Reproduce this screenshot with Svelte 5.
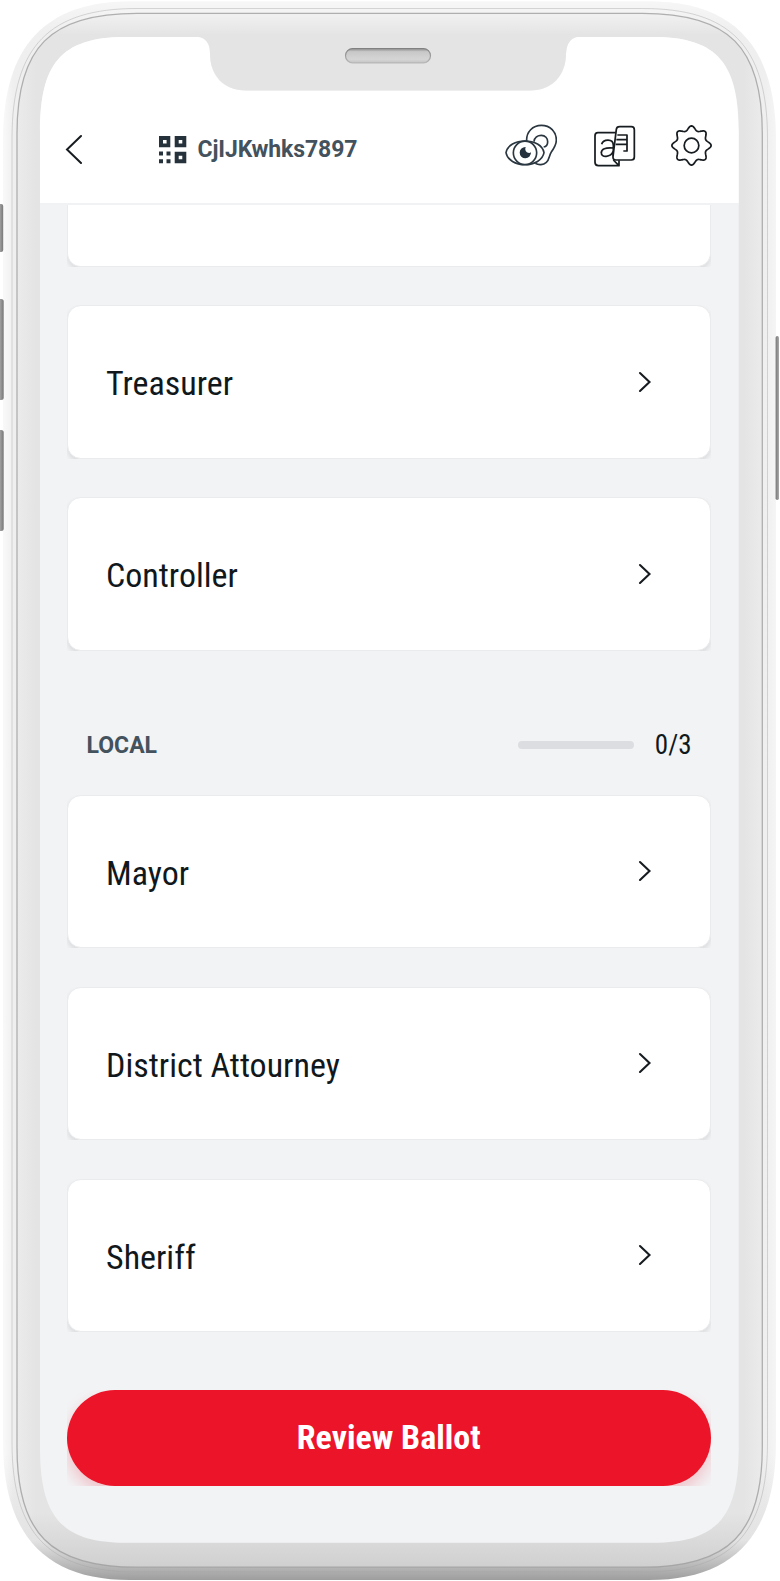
<script>
  const stateRaces = ['Treasurer', 'Controller'];
  const localRaces = ['Mayor', 'District Attourney', 'Sheriff'];

  const points = Array.from({ length: 160 }, (_, i) => {
    const a = (i / 160) * Math.PI * 2;
    const r = 52 + 6.4 * Math.cos(8 * a) + 0.4 * Math.cos(16 * a);
    return `${(61 + r * Math.cos(a)).toFixed(2)} ${(61 + r * Math.sin(a)).toFixed(2)}`;
  });
  const gearPath = `M${points.join('L')}Z`;

  // Rounded device outline: sides, top and bottom, curve length and handle offset
  function outline(l, t, r, b, w, h, hx, hy) {
    return `M${l} ${t + h}C${l} ${t + hy} ${l + hx} ${t} ${l + w} ${t}H${r - w}C${r - hx} ${t} ${r} ${t + hy} ${r} ${t + h}V${b - h}C${r} ${b - hy} ${r - hx} ${b} ${r - w} ${b}H${l + w}C${l + hx} ${b} ${l} ${b - hy} ${l} ${b - h}Z`;
  }
  const shell = outline(3, 1.5, 776, 1580, 127, 138, 43, 44);
  const rim = outline(12, 8.5, 767.5, 1572, 125, 130, 38, 37);
  const bezel = outline(17, 13.4, 762.3, 1567.2, 120, 120, 33, 34);
  const screen = outline(40, 37, 738.7, 1542.7, 85, 95, 20, 28);
</script>

{#snippet race(name)}
  <div class="clip">
    <button class="card">
      <span class="name">{name}</span>
      <svg class="chevron" width="14" height="22" viewBox="0 0 14 22"><path d="M2 2L11.5 11L2 20" /></svg>
    </button>
  </div>
{/snippet}

<div class="phone">
  <svg class="frame" width="780" height="1581" viewBox="0 0 780 1581">
    <defs>
      <linearGradient id="side" x1="0" x2="1"><stop offset="0" stop-color="#f9f9f9" /><stop offset=".014" stop-color="#efefef" /><stop offset=".986" stop-color="#efefef" /><stop offset="1" stop-color="#f5f5f5" /></linearGradient>
      <linearGradient id="inner" x1="0" x2="1"><stop offset="0" stop-color="#ebebeb" /><stop offset=".025" stop-color="#e4e4e4" /><stop offset=".975" stop-color="#e4e4e4" /><stop offset="1" stop-color="#ebebeb" /></linearGradient>
      <linearGradient id="base" x1="0" y1="0" x2="0" y2="1"><stop offset="0" stop-color="#fff" stop-opacity=".45" /><stop offset=".02" stop-color="#fff" stop-opacity="0" /><stop offset=".92" stop-color="#888" stop-opacity="0" /><stop offset=".975" stop-color="#888" stop-opacity=".12" /><stop offset="1" stop-color="#777" stop-opacity=".68" /></linearGradient>
      <linearGradient id="innerBase" x1="0" y1="0" x2="0" y2="1"><stop offset="0" stop-color="#fff" stop-opacity=".5" /><stop offset=".014" stop-color="#fff" stop-opacity="0" /><stop offset=".965" stop-color="#999" stop-opacity="0" /><stop offset="1" stop-color="#999" stop-opacity=".27" /></linearGradient>
      <linearGradient id="keyL" x1="0" x2="1"><stop offset="0" stop-color="#ccc" /><stop offset=".45" stop-color="#9a9a9a" /><stop offset="1" stop-color="#777" /></linearGradient>
      <linearGradient id="keyR" x1="0" x2="1"><stop offset="0" stop-color="#777" /><stop offset="1" stop-color="#aaa" /></linearGradient>
      <linearGradient id="slot" x1="0" y1="0" x2="0" y2="1"><stop offset="0" stop-color="#888" /><stop offset=".22" stop-color="#c8c8c8" /><stop offset=".75" stop-color="#d5d5d5" /><stop offset="1" stop-color="#c4c4c4" /></linearGradient>
      <linearGradient id="slotEdge" x1="0" y1="0" x2="0" y2="1"><stop offset="0" stop-color="#808080" /><stop offset="1" stop-color="#b8b8b8" /></linearGradient>
    </defs>
    <path d={shell} fill="url(#side)" />
    <path d={shell} fill="url(#base)" />
    <g fill="url(#keyL)">
      <rect x="-2" y="204" width="5.2" height="48" rx="2" />
      <rect x="-2" y="299" width="5.7" height="101" rx="2.5" />
      <rect x="-2" y="430" width="5.7" height="101" rx="2.5" />
    </g>
    <rect x="775.6" y="336" width="3.4" height="164" rx="1.7" fill="url(#keyR)" />
    <path d={rim} fill="none" stroke="#a5a5a5" stroke-opacity=".42" />
    <path d={bezel} fill="url(#inner)" />
    <path d={bezel} fill="url(#innerBase)" stroke="#999" stroke-opacity=".75" stroke-width="1.3" />
    <path d={screen} fill="#f2f3f5" />
    <path d="M40 203V132C40 65 60 37 125 37H197Q210 37 210 54C210 75 222 90.5 246 90.5H531C553 90.5 566 75 566 54Q567 37 578 37H653.7C718.7 37 738.7 65 738.7 132V203Z" fill="#fff" />
    <path d="M190 36.8H197Q210 38 210 54C210 75 224 90.5 246 90.5H530C552 90.5 566 75 566 54Q567 37 580 36.8Z" fill="#e4e4e4" />
    <rect x="345.5" y="48.5" width="85" height="14.4" rx="7.2" fill="url(#slot)" stroke="url(#slotEdge)" stroke-width="1.2" />
    <path d="M40 204H738.7" stroke="#f1f2f4" stroke-width="2" />
  </svg>

  <header>
    <svg class="back" width="18" height="30" viewBox="0 0 18 30"><path d="M16 2L2 15.5L16 29" /></svg>
    <svg class="qr" width="28" height="28" viewBox="0 0 28 28">
      <path fill-rule="evenodd" d="M0 0H11.3V11.3H0ZM4 4V7.6H7.6V4ZM15.7 0H27.3V11.3H15.7ZM19.7 4V7.6H23.3V4ZM15.7 15.7H27.3V27.3H15.7ZM19.7 19.7V23.3H23.3V19.7Z" />
      <path d="M0 15.5h4v4h-4zM7.5 15.5h4v4h-4zM0 23.3h4v4h-4zM7.5 23.3h4v4h-4z" />
    </svg>
    <strong>CjIJKwhks7897</strong>
    <svg class="eye" width="52" height="42" viewBox="46 43 156 126">
      <path d="M111 95C109 66 130 47 155 47C182 47 200 66 200 91C200 104 193 116 185 127C178 137 180 150 170 158C161 166 147 167 137 161M133 96C134 84 144 77 155 77C167 77 174 86 174 96C174 106 168 111 162 112" />
      <path d="M49 129C53 107 78 94 106 94C134 94 159 107 163 129C159 151 134 165 106 165C78 165 53 151 49 129Z" fill="#fff" />
      <circle cx="106" cy="129.5" r="35" fill="#fff" />
      <path class="iris" d="M108 112A17 17 0 1 0 124 128C116 134 103 125 108 112Z" />
    </svg>
    <svg class="lang" width="42" height="42" viewBox="312 43 126 126">
      <path d="M380 66H324Q315 66 315 75V155Q315 165 325 165H387V149M387 165L370 148" />
      <path d="M335 101C339 85 370 82 370 104V137M370 112C346 110 334 115 334 126C333 142 362 141 370 121" />
      <path d="M389 48H424Q433 48 433 57V139Q433 148 424 148H378Q368 148 369 138L379 56Q380 48 389 48Z" fill="#fff" />
      <path d="M382 73H411V121H400M379 87H411M377 101H411" />
    </svg>
    <svg class="gear" width="41" height="41" viewBox="-.5 -.5 123 123">
      <path d={gearPath} /><circle cx="61" cy="61" r="22" />
    </svg>
  </header>

  <main>
    <div class="clip tail"><div class="card"></div></div>
    {#each stateRaces as name}{@render race(name)}{/each}
    <section>
      <h2>LOCAL</h2>
      <div class="progress"></div>
      <span class="count">0/3</span>
    </section>
    {#each localRaces as name}{@render race(name)}{/each}
    <div class="cta"><button>Review Ballot</button></div>
  </main>
</div>

<style>
  :global(body) { margin: 0; background: #fff; }
  .phone { position: relative; width: 780px; height: 1581px; overflow: hidden; font-family: 'Roboto Condensed', Roboto, sans-serif; font-stretch: 75%; color: #11181c; }
  .frame { position: absolute; inset: 0; }
  header { position: relative; box-sizing: border-box; height: 205px; padding: 124px 68px 0 64.5px; display: flex; align-items: flex-start; }
  header svg { fill: none; stroke: #171c20; stroke-width: 5.2; stroke-linejoin: round; flex: none; }
  header .back { stroke-width: 2; stroke-linejoin: miter; stroke-linecap: round; margin-top: 10px; }
  header .qr { fill: #26323b; stroke: none; margin: 12px 0 0 76.5px; }
  strong { flex: 1; margin: 12px 0 0 10.5px; font: bold 23px/27px Roboto, sans-serif; font-stretch: 100%; letter-spacing: -.1px; color: #43525d; }
  header .eye { stroke: #2b3740; stroke-width: 5; }
  .eye .iris { fill: #24313c; stroke: none; }
  .lang { margin: .5px 0 0 37px; }
  .gear { margin: 1px 0 0 35px; }
  main { position: relative; width: 643.5px; margin-left: 67px; }
  .clip { height: 153.5px; overflow: hidden; margin-bottom: 38.5px; }
  .card { display: flex; justify-content: space-between; align-items: center; box-sizing: border-box; width: 643.5px; height: 153.5px; padding: 0 57.5px 0 38px; border: 1px solid #eaebed; border-radius: 14px; background: #fff; box-shadow: 0 3px 5px #00000018; font: inherit; color: inherit; }
  .tail { height: 61.5px; }
  .tail .card { height: 61.5px; border-top: 0; border-radius: 0 0 14px 14px; }
  .name { font-size: 34px; line-height: 40px; padding-top: 3px; }
  .chevron { fill: none; stroke: #171c20; stroke-width: 2.1; stroke-linecap: round; }
  section { display: flex; align-items: center; height: 40px; padding: 0 19px 0 19.5px; margin: 74.5px 0 29.5px; }
  h2 { flex: 1; margin: 0; font: bold 23px/27px Roboto, sans-serif; font-stretch: 100%; color: #43525d; }
  .progress { width: 116px; height: 8px; border-radius: 4px; background: #dcdde0; margin: 0 21px 1px 0; }
  .count { font-size: 27px; line-height: 32px; }
  .cta { height: 96px; overflow: hidden; margin-top: 58px; }
  .cta button { width: 100%; height: 96px; border: 0; border-radius: 48px; background: #ec1428; box-shadow: 0 8px 16px #ec142838; color: #fff; font: inherit; font-size: 34px; font-weight: 700; padding: 0 6px 2px; }
</style>
